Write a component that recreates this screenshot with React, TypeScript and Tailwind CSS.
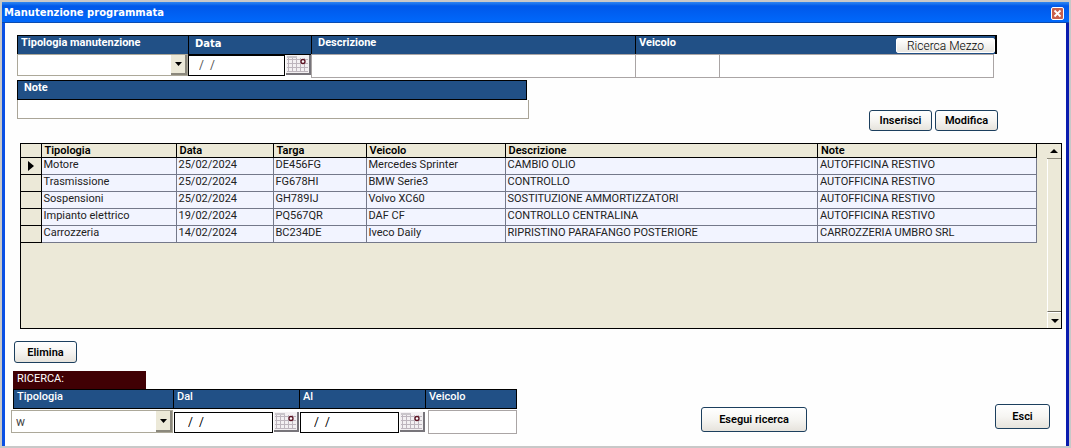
import type { ReactNode } from "react";

const rows = [
  ["Motore", "25/02/2024", "DE456FG", "Mercedes Sprinter", "CAMBIO OLIO", "AUTOFFICINA RESTIVO"],
  ["Trasmissione", "25/02/2024", "FG678HI", "BMW Serie3", "CONTROLLO", "AUTOFFICINA RESTIVO"],
  ["Sospensioni", "25/02/2024", "GH789IJ", "Volvo XC60", "SOSTITUZIONE AMMORTIZZATORI", "AUTOFFICINA RESTIVO"],
  ["Impianto elettrico", "19/02/2024", "PQ567QR", "DAF CF", "CONTROLLO CENTRALINA", "AUTOFFICINA RESTIVO"],
  ["Carrozzeria", "14/02/2024", "BC234DE", "Iveco Daily", "RIPRISTINO PARAFANGO POSTERIORE", "CARROZZERIA UMBRO SRL"],
];
const columns = ["Tipologia", "Data", "Targa", "Veicolo", "Descrizione", "Note"];

function Button({ children, className }: { children: ReactNode; className: string }) {
  return (
    <button
      type="button"
      className={`rounded-[3px] border border-[#1c3f5e] bg-linear-to-b from-white via-[#f6f5f2] to-[#e6e3dc] text-center text-[11px] leading-none font-semibold text-black ${className}`}
    >
      {children}
    </button>
  );
}

function CalendarButton({ label }: { label: string }) {
  return (
    <button type="button" aria-label={label} className="h-5 w-[25px] shrink-0 border-r-2 border-b-2 border-[#77747a] bg-[#f3f0f2]">
      <svg viewBox="0 0 23 18" className="block h-[18px] w-[23px]">
        <rect x="1" y="1" width="10" height="2" fill="#c9c5ca" />
        <path d="M2.5 3v14M6.5 3v14M10.5 3v14M14.5 3v14M18.5 3v14M1 4.5h21M1 8.5h21M1 12.5h21M1 16.5h21" stroke="#bdb5bd" fill="none" />
        <circle cx="17" cy="6.500" r="2" fill="#fff" stroke="#5a1020" strokeWidth="1.300" />
      </svg>
    </button>
  );
}

function Combo({ id, value, className }: { id: string; value: string; className: string }) {
  return (
    <div className={`grid border border-[#aca899] bg-white ${className}`}>
      <select id={id} defaultValue={value} className="col-start-1 row-start-1 w-full appearance-none bg-transparent px-1 text-[12px] leading-none text-[#444] outline-none">
        <option value={value}>{value}</option>
      </select>
      <span className="pointer-events-none col-start-1 row-start-1 flex w-4 items-center justify-center justify-self-end border-r-2 border-b-2 border-[#8b887c] bg-[#ece9d8]">
        <svg viewBox="0 0 7 4" className="h-1 w-[7px]"><path d="M0 0h7L3.500 4z" /></svg>
      </span>
    </div>
  );
}

function DateInput({ id, className }: { id: string; className: string }) {
  return <input id={id} type="text" defaultValue="/  /" className={`h-[21px] border border-black bg-white pb-[2px] text-[12px] leading-none outline-none ${className}`} />;
}

const topLabel = "block h-[19px] border-t border-l border-black bg-[#215086] text-[11px] leading-[14px] font-bold text-white";
const searchLabel = "block h-5 border-y border-l border-black bg-[#215086] pl-[3px] text-[11px] leading-[13px] font-medium text-white";

export default function App() {
  return (
    <div className="bg-[#c8c8c8] px-[2px] py-[2px] font-[Roboto,sans-serif] text-[12px] text-black">
      <div className="border-r-[3px] border-l-[3px] border-r-[#0a1cae] border-l-[#0a50e4] bg-[#fefefe]">
        <header className="-mx-[3px] flex h-[21px] items-center justify-between border-b border-[#0a4bb0] bg-linear-to-b from-[#2f86f0] via-[#0058ea] via-20% to-[#0068fb] pt-[2px] pr-[5px] pl-[2px]">
          <h1 className="font-['DejaVu_Sans',sans-serif] text-[10px] leading-3 font-bold text-white">Manutenzione programmata</h1>
          <button type="button" aria-label="Chiudi" className="flex size-[13px] items-center justify-center rounded-[2px] border border-white bg-[#c8604c]">
            <svg viewBox="0 0 9 9" className="size-[9px]"><path d="M1.500 1.500l6 6M7.500 1.500l-6 6" stroke="#fff" strokeWidth="1.800" /></svg>
          </button>
        </header>

        <main className="flex flex-col pt-3 pb-3">
          <form className="mr-[69px] ml-3 flex">
            <div className="w-[171px] shrink-0">
              <label htmlFor="tipo" className={`${topLabel} pl-[3px]`}>Tipologia manutenzione</label>
              <Combo id="tipo" value="" className="h-[22px]" />
            </div>
            <div className="w-[123px] shrink-0">
              <label htmlFor="data" className="block h-5 border border-r-0 border-black bg-[#215086] pl-[6px] font-['DejaVu_Sans',sans-serif] text-[10px] leading-[15px] font-bold text-white">Data</label>
              <div className="flex gap-px">
                <DateInput id="data" className="w-[97px] pl-[10px] text-[#555]" />
                <CalendarButton label="Scegli data" />
              </div>
            </div>
            <div className="flex-[324]">
              <label htmlFor="descrizione" className={`${topLabel} pl-[6px]`}>Descrizione</label>
              <input id="descrizione" className="block h-6 w-full border border-r-0 border-[#aaa5a5] bg-white px-1 outline-none" />
            </div>
            <div className="flex-[362]">
              <div className="flex h-[19px] justify-between border-t border-r-2 border-l border-black bg-[#215086]">
                <label htmlFor="veicolo" className="pl-[3px] text-[11px] leading-[14px] font-bold text-white">Veicolo</label>
                <button type="button" className="mt-[2px] h-[15px] w-[99px] rounded-[2px] border border-white bg-linear-to-b from-white to-[#e9e7e2] text-[12px] leading-[12px] font-light text-black">Ricerca Mezzo</button>
              </div>
              <div className="mr-[3px] flex">
                <input id="veicolo" className="h-6 w-[84px] border border-r-0 border-[#aaa5a5] bg-white px-1 outline-none" />
                <input aria-label="Descrizione veicolo" className="h-6 min-w-0 flex-1 border border-[#aaa5a5] bg-white px-1 outline-none" />
              </div>
            </div>
          </form>

          <div className="mt-[2px] ml-3 flex w-[512px] flex-col">
            <label htmlFor="note" className="mr-[2px] block h-5 border border-black bg-[#215086] pl-[6px] text-[11px] leading-[14px] font-bold text-white">Note</label>
            <input id="note" className="h-[19px] border border-t-0 border-[#aaa598] bg-white px-1 outline-none" />
          </div>
          <div className="-mt-[9px] mr-[68px] flex justify-end gap-[3px]">
            <Button className="h-[21px] w-[63px]">Inserisci</Button>
            <Button className="h-[21px] w-[63px]">Modifica</Button>
          </div>

          <section className="mt-3 mr-1 ml-[15px] flex h-[186px] border border-black bg-[#ece9d8]">
            <div className="min-w-0 flex-1">
              <table className="w-full table-fixed border-collapse text-left">
                <colgroup>
                  <col className="w-5" />
                  <col className="w-[135px]" />
                  <col className="w-[97px]" />
                  <col className="w-[93px]" />
                  <col className="w-[139px]" />
                  <col />
                  <col className="w-[219px]" />
                </colgroup>
                <thead>
                  <tr className="h-[13px]">
                    <th aria-label="Selezione" className="border-r border-b border-black p-0" />
                    {columns.map((c) => (
                      <th key={c} className="border-r border-b border-black p-0 pl-[3px] text-[11px] leading-[13px] font-semibold">{c}</th>
                    ))}
                  </tr>
                </thead>
                <tbody>
                  {rows.map((r, i) => (
                    <tr key={r[0]} className="h-[17px]">
                      <td className="border-r border-b border-black p-0">
                        {i === 0 && <svg viewBox="0 0 6 10" className="ml-[7px] block h-[10px] w-[6px]"><path d="M0 0l6 5-6 5z" /></svg>}
                      </td>
                      {r.map((cell, j) => (
                        <td key={j} className="overflow-hidden border-r border-b border-[#74788a] bg-[#f2f4ff] p-0 pl-[2px] align-top text-[11px] leading-[13px] whitespace-nowrap text-[#222]">{cell}</td>
                      ))}
                    </tr>
                  ))}
                </tbody>
              </table>
            </div>
            <div aria-hidden="true" className="ml-[10px] flex w-[14px] flex-col">
              <span className="flex h-[15px] items-center justify-center border-b border-[#8d8a7c]">
                <svg viewBox="0 0 8 4" className="h-1 w-2"><path d="M0 4h8L4 0z" /></svg>
              </span>
              <span className="flex-1 border-b border-l border-b-[#6f6c60] border-l-white" />
              <span className="flex h-4 items-center justify-center border-t border-l border-white">
                <svg viewBox="0 0 8 4" className="h-1 w-2"><path d="M0 0h8L4 4z" /></svg>
              </span>
            </div>
          </section>

          <Button className="mt-3 ml-[9px] h-[22px] w-[63px]">Elimina</Button>

          <h2 className="mt-2 ml-2 h-[18px] w-[133px] bg-[#400004] pl-1 text-[11px] leading-[15px] text-white">RICERCA:</h2>
          <div className="mr-4 ml-[6px] flex">
            <div className="w-[162px]">
              <label htmlFor="cerca-tipo" className={`${searchLabel} ml-[2px]`}>Tipologia</label>
              <Combo id="cerca-tipo" value="w" className="mt-px h-[23px]" />
            </div>
            <div className="w-[126px]">
              <label htmlFor="dal" className={searchLabel}>Dal</label>
              <div className="mt-[3px] flex gap-px pl-px">
                <DateInput id="dal" className="w-[99px] pl-[13px]" />
                <CalendarButton label="Scegli data iniziale" />
              </div>
            </div>
            <div className="w-[126px]">
              <label htmlFor="al" className={searchLabel}>Al</label>
              <div className="mt-[3px] flex gap-px pl-px">
                <DateInput id="al" className="w-[99px] pl-[13px]" />
                <CalendarButton label="Scegli data finale" />
              </div>
            </div>
            <div className="w-[92px]">
              <label htmlFor="cerca-veicolo" className={`${searchLabel} border-r`}>Veicolo</label>
              <div className="mt-px flex pl-[3px]">
                <input id="cerca-veicolo" className="h-6 min-w-0 flex-1 border border-[#aaa5a5] bg-white px-1 outline-none" />
              </div>
            </div>
            <div className="flex flex-1 items-start justify-between pt-[15px] pl-[184px]">
              <Button className="mt-[3px] h-[25px] w-[106px]">Esegui ricerca</Button>
              <Button className="h-[25px] w-[55px]">Esci</Button>
            </div>
          </div>
        </main>
      </div>
    </div>
  );
}
